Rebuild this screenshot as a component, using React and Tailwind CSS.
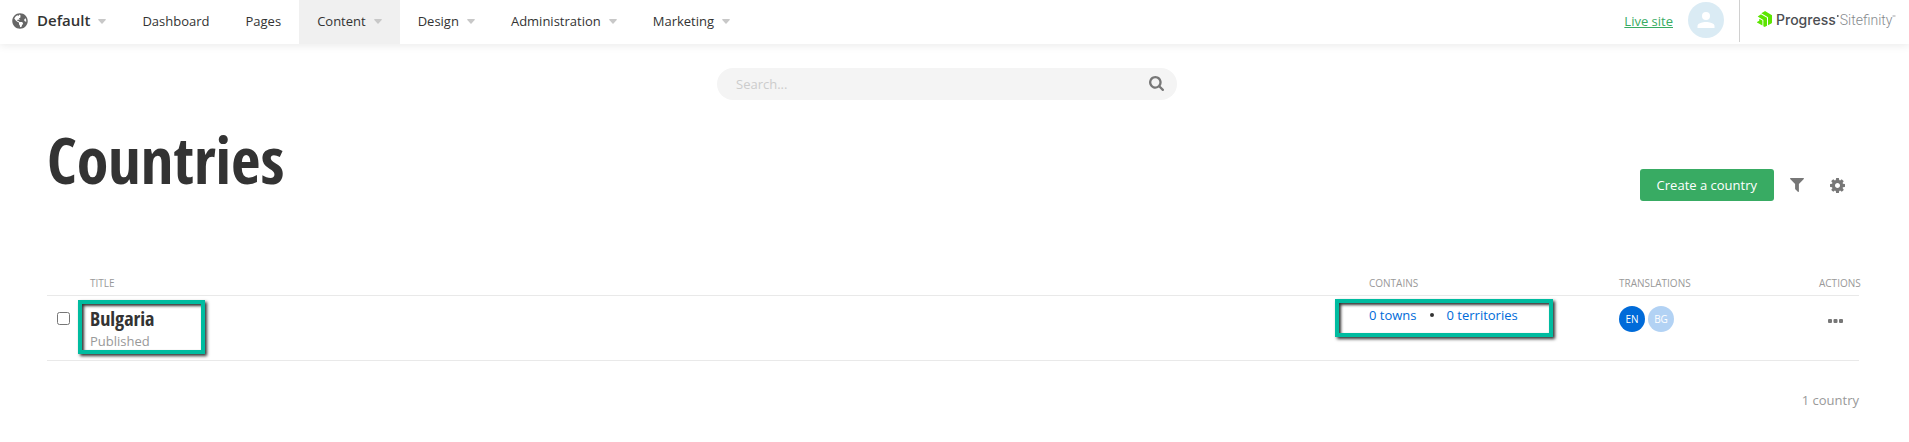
import React from "react";
import { FaGlobeAmericas } from "react-icons/fa";

const menu = [
  { label: "Dashboard" },
  { label: "Pages" },
  { label: "Content", caret: true, active: true },
  { label: "Design", caret: true },
  { label: "Administration", caret: true },
  { label: "Marketing", caret: true },
];

function Caret() {
  return (
    <svg viewBox="0 0 8 5" className="h-[5px] w-2 fill-[#c8c8c8]" aria-hidden="true">
      <path d="M0.3 0h7.4v1L4 5 0.3 1z" />
    </svg>
  );
}

function SearchIcon() {
  return (
    <svg viewBox="64 128 1664 1664" className="size-[15px] fill-[#777]" aria-hidden="true">
      <path d="M1216 832q0-185-131.500-316.500t-316.500-131.500-316.500 131.500-131.500 316.500 131.500 316.500 316.500 131.500 316.500-131.500 131.500-316.500zm512 832q0 52-38 90t-90 38q-54 0-90-38l-343-342q-179 124-399 124-143 0-273.500-55.500t-225-150-150-225-55.500-273.500 55.500-273.500 150-225 225-150 273.500-55.500 273.500 55.500 225 150 150 225 55.500 273.500q0 220-124 399l343 343q37 37 37 90z" />
    </svg>
  );
}

function FilterIcon() {
  return (
    <svg viewBox="192 256 1408 1408" className="size-[14px] fill-[#777]" aria-hidden="true">
      <path d="M1595 295q17 41-14 70l-493 493v742q0 42-39 59-13 5-25 5-27 0-45-19l-256-256q-19-19-19-45v-486l-493-493q-31-29-14-70 17-39 59-39h1280q42 0 59 39z" />
    </svg>
  );
}

function CogIcon() {
  return (
    <svg viewBox="128 128 1536 1536" className="size-[15px] fill-[#777]" aria-hidden="true">
      <path d="M1152 896q0-106-75-181t-181-75-181 75-75 181 75 181 181 75 181-75 75-181zm512-109v222q0 12-8 23t-20 13l-185 28q-19 54-39 91 35 50 107 138 10 12 10 25t-9 23q-27 37-99 108t-94 71q-12 0-26-9l-138-108q-44 23-91 38-16 136-29 186-7 28-36 28h-222q-14 0-24.500-8.500t-11.500-21.500l-28-184q-49-16-90-37l-141 107q-10 9-25 9-14 0-25-11-126-114-165-168-7-10-7-23 0-12 8-23 15-21 51-66.500t54-70.500q-27-50-41-99l-183-27q-13-2-21-12.500t-8-23.500v-222q0-12 8-23t19-13l186-28q14-46 39-92-40-57-107-138-10-12-10-24 0-10 9-23 26-36 98.500-107.500t94.500-71.500q13 0 26 10l138 107q44-23 91-38 16-136 29-186 7-28 36-28h222q14 0 24.500 8.500t11.500 21.500l28 184q49 16 90 37l142-107q9-9 24-9 13 0 25 10 129 119 165 170 7 8 7 22 0 12-8 23-15 21-51 66.500t-54 70.500q26 50 41 98l183 28q13 2 21 12.500t8 23.500z" />
    </svg>
  );
}

function ProgressMark() {
  return (
    <svg viewBox="0 0 45 48" className="h-4 w-[15px] fill-[#5ce500]" aria-hidden="true">
      <path d="M45 12.500v22.200a2 2 0 0 1-1 1.700l-11 6.400V18.500L13 6.800 23.200.500a2 2 0 0 1 1.900 0z" />
      <path d="M30 20.500v23.400l-6 3.500a2 2 0 0 1-2 0l-3-1.600V27L2 16.300l9-5.600a2 2 0 0 1 1.900 0z" />
      <path d="M16.300 28.400v15.200L0 34.200v-1l6.700-3.900v-6.400z" />
    </svg>
  );
}

export default function App() {
  return (
    <div className="bg-white font-['Open_Sans',sans-serif] text-[13px] leading-5 text-[#333]">
      <header className="flex h-11 items-start shadow-[0_2px_8px_rgba(0,0,0,0.08)]">
        <button type="button" className="flex h-11 items-center pr-[18px] pb-[2px] pl-3">
          <FaGlobeAmericas className="size-4 text-[#666]" />
          <span className="mr-2 ml-[9px] pb-[2px] text-[15px] font-semibold">Default</span>
          <Caret />
        </button>
        <nav className="flex">
          {menu.map((m) => (
            <a
              key={m.label}
              href="#"
              className={
                m.active
                  ? "flex h-11 items-center gap-2 bg-[#f0f0f0] px-[18px] pb-[2px]"
                  : "flex h-11 items-center gap-2 px-[18px] pb-[2px]"
              }
            >
              {m.label}
              {m.caret && <Caret />}
            </a>
          ))}
        </nav>
        <div className="ml-auto flex items-start">
          <a href="#" className="flex h-11 items-center pb-[2px] text-[#38ab63] underline">Live site</a>
          <button type="button" aria-label="Account" className="mt-[2px] ml-[15px] flex size-9 items-center justify-center rounded-full bg-[#daebf4]">
            <svg viewBox="0 0 18 16" className="h-4 w-[18px] fill-white" aria-hidden="true">
              <circle cx="9" cy="4" r="4" />
              <path d="M0.500 16v-2.200C0.500 11.200 6 10 9 10s8.500 1.200 8.500 3.800V16z" />
            </svg>
          </button>
          <div className="ml-[15px] flex h-[42px] w-[170px] items-center border-l border-[#d0d0d0] pb-1 pl-[17px] text-sm whitespace-nowrap">
            <ProgressMark />
            <span className="ml-1 pt-[2px] font-['Inter',sans-serif] font-medium text-[#4b4e52]">Progress</span>
            <svg viewBox="0 0 4 12" className="h-3 w-1 fill-[#4b4e52]" aria-hidden="true">
              <circle cx="1.800" cy="3" r="0.900" />
            </svg>
            <span className="pt-[2px] font-['Roboto',sans-serif] font-light text-[#85898d]">Sitefinity</span>
            <svg viewBox="0 0 4 12" className="h-3 w-1 fill-[#a0a3a6]" aria-hidden="true">
              <path d="M0.500 2.500h3v1h-3z" />
            </svg>
          </div>
        </div>
      </header>

      <main className="pr-[50px] pl-[47px]">
        <form className="mt-6 flex justify-center pr-3" role="search">
          <div className="flex h-8 w-[460px] items-center rounded-full bg-[#f4f4f4] pr-[13px] pl-[19px]">
            <input
              type="search"
              aria-label="Search"
              placeholder="Search..."
              className="min-w-0 flex-1 bg-transparent outline-none placeholder:text-[#ccc]"
            />
            <button type="submit" aria-label="Submit search" className="pb-[2px]">
              <SearchIcon />
            </button>
          </div>
        </form>

        <div className="flex items-end justify-between">
          <h1 className="mt-5 pb-px font-['Open_Sans_Condensed','Open_Sans',sans-serif] text-[64px] leading-20 font-bold">
            Countries
          </h1>
          <div className="flex h-8 items-center pr-[14px]">
            <button type="button" className="h-8 rounded-[3px] bg-[#38ab63] px-[17px] text-white">
              Create a country
            </button>
            <button type="button" aria-label="Filter" className="ml-4">
              <FilterIcon />
            </button>
            <button type="button" aria-label="Settings" className="ml-[26px]">
              <CogIcon />
            </button>
          </div>
        </div>

        <table className="mt-[70px] w-full table-fixed border-collapse text-left">
          <thead>
            <tr className="h-6 border-b border-[#e9e9e9] text-[10px] text-[#999] uppercase">
              <th className="w-[43px]" aria-label="Select" />
              <th className="font-normal">Title</th>
              <th className="w-[250px] font-normal">Contains</th>
              <th className="w-[200px] font-normal">Translations</th>
              <th className="w-10 font-normal whitespace-nowrap">Actions</th>
            </tr>
          </thead>
          <tbody>
            <tr className="h-[65px] border-b border-[#e9e9e9] align-top">
              <td className="pt-4 pl-[10px]">
                <input type="checkbox" aria-label="Select Bulgaria" className="block size-[13px]" />
              </td>
              <td className="relative pt-[11px]">
                <a href="#" className="block font-['Open_Sans_Condensed','Open_Sans',sans-serif] text-xl leading-6 font-bold">
                  Bulgaria
                </a>
                <span className="block text-[#999]">Published</span>
                <span className="pointer-events-none absolute top-1 -left-3 h-[54px] w-[127px] border-4 border-[#00bca0] shadow-[2px_2px_3px_rgba(0,0,0,0.8),inset_2px_2px_3px_rgba(0,0,0,0.8)]" />
              </td>
              <td className="relative pt-[9px]">
                <div className="flex items-center text-[#006bd9]">
                  <a href="#">0 towns</a>
                  <span className="mx-[13px] size-1 rounded-full bg-[#333]" />
                  <a href="#">0 territories</a>
                </div>
                <span className="pointer-events-none absolute top-[3px] -left-[34px] h-[38px] w-[218px] border-4 border-[#00bca0] shadow-[2px_2px_3px_rgba(0,0,0,0.8),inset_2px_2px_3px_rgba(0,0,0,0.8)]" />
              </td>
              <td className="pt-[10px]">
                <div className="flex gap-[3px] text-[10px] font-medium text-white">
                  <span className="flex size-[26px] items-center justify-center rounded-full bg-[#006bd9]">EN</span>
                  <span className="flex size-[26px] items-center justify-center rounded-full bg-[#b2d2f4]">BG</span>
                </div>
              </td>
              <td className="pt-[23px] pl-[9px]">
                <button type="button" aria-label="Actions for Bulgaria" className="block">
                  <svg viewBox="0 0 15 4" className="h-1 w-[15px] fill-[#777]" aria-hidden="true">
                    <rect width="4" height="4" rx="1" />
                    <rect x="5.500" width="4" height="4" rx="1" />
                    <rect x="11" width="4" height="4" rx="1" />
                  </svg>
                </button>
              </td>
            </tr>
          </tbody>
        </table>
        <p className="mt-[29px] pb-8 text-right text-[#999]">1 country</p>
      </main>
    </div>
  );
}
